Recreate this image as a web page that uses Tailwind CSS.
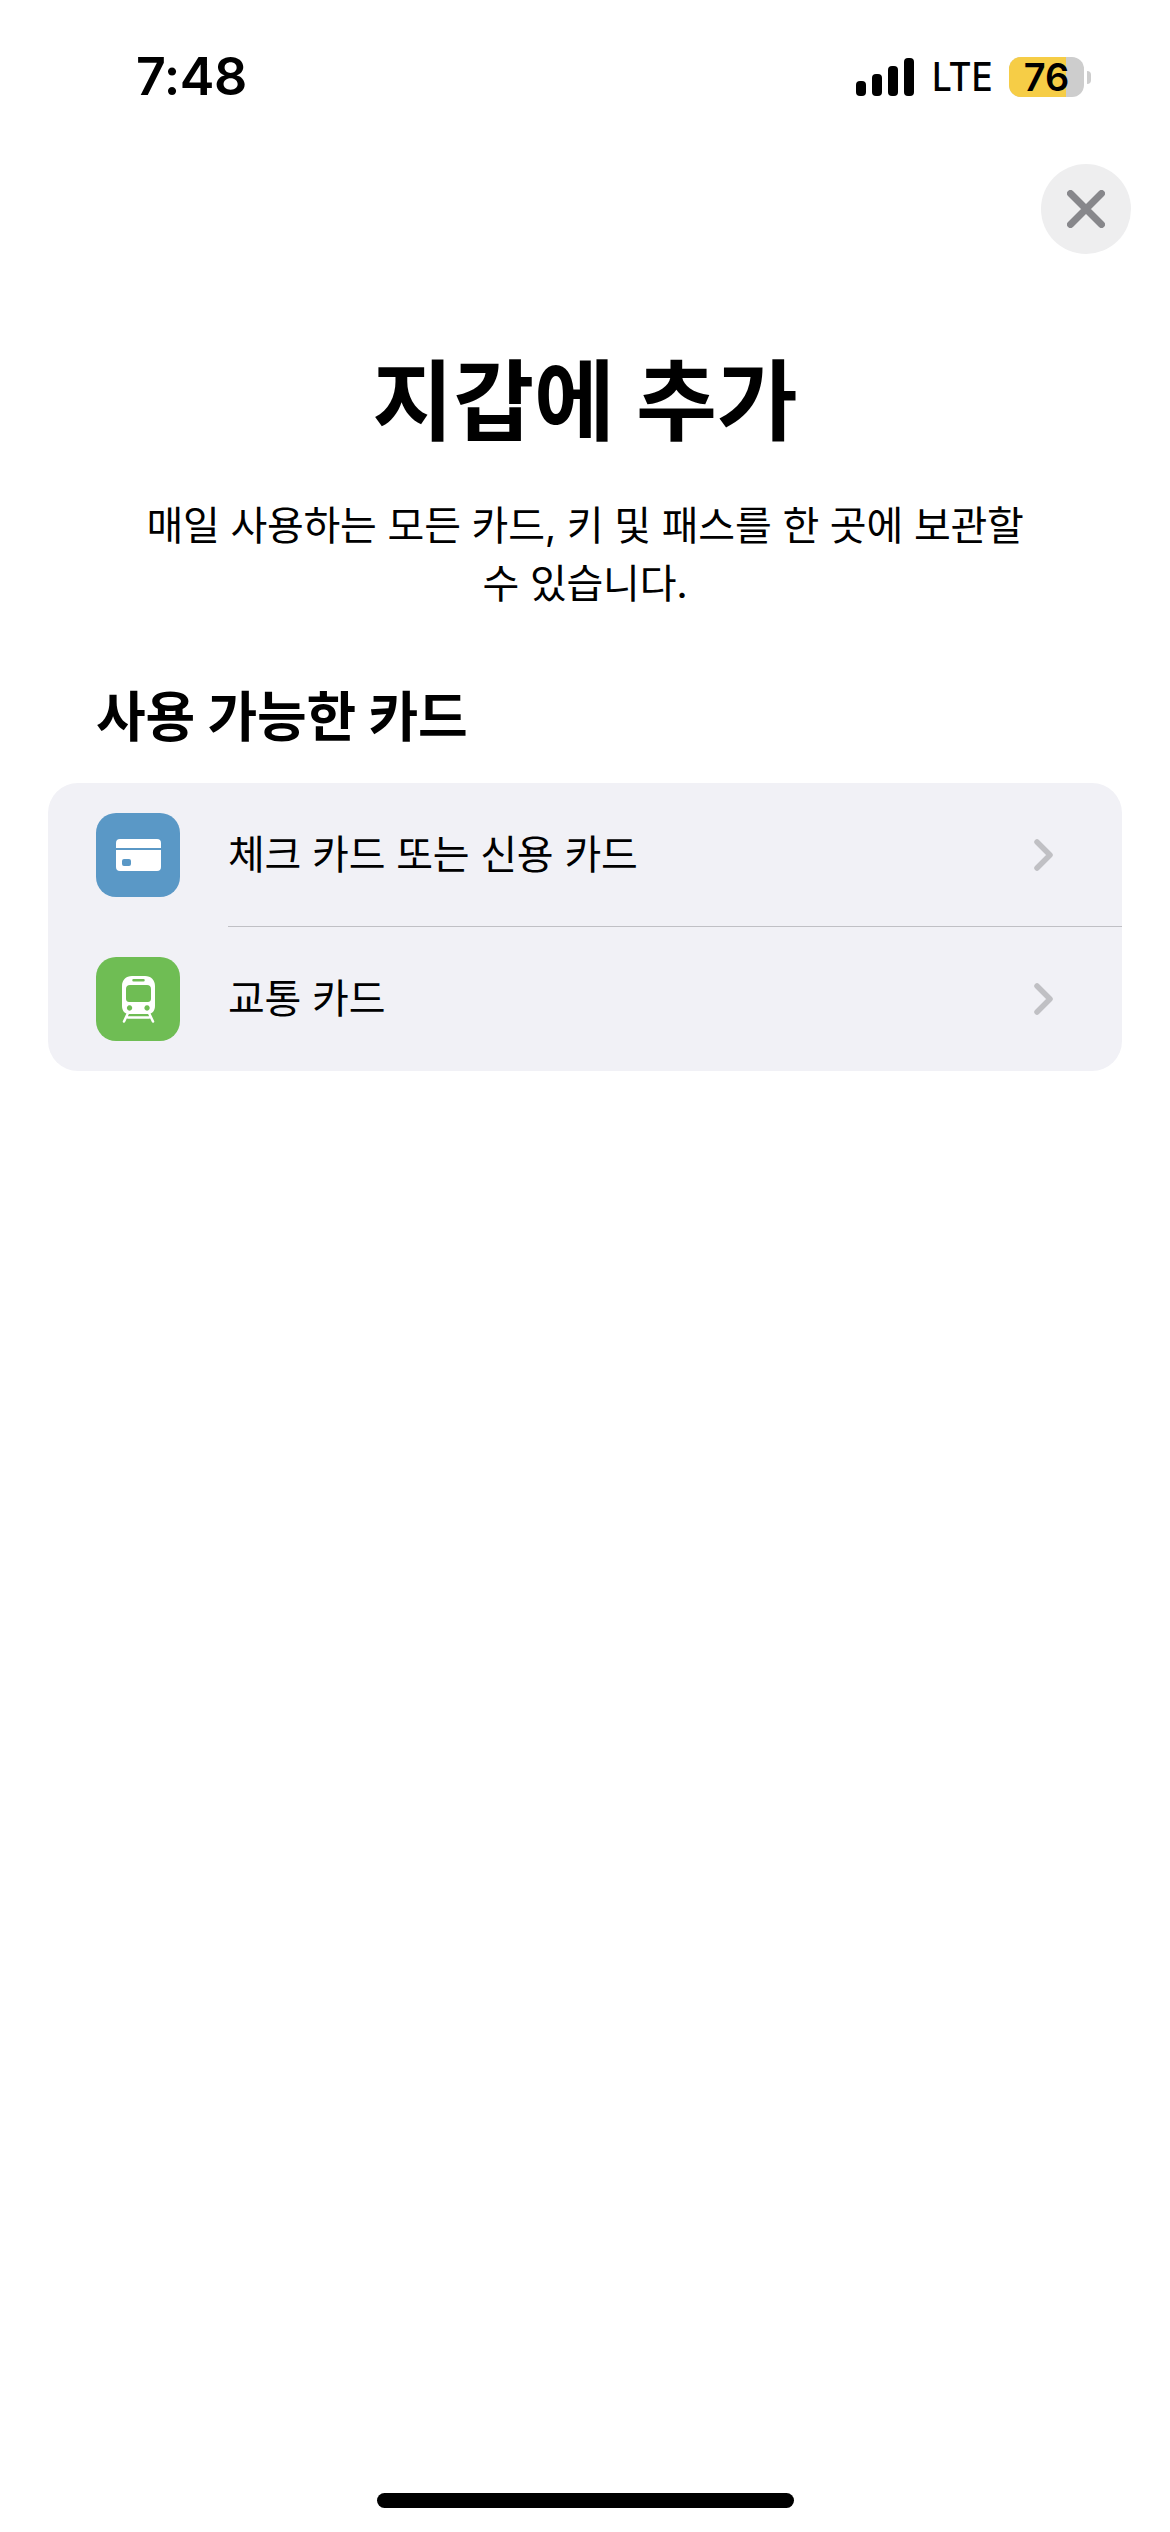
<!DOCTYPE html>
<html lang="ko">
<head>
    <meta charset="UTF-8">
    <meta name="viewport" content="width=device-width, initial-scale=1.0">
    <title>지갑에 추가</title>
    <script src="https://cdn.jsdelivr.net/npm/@tailwindcss/browser@4"></script>
</head>
<body class="bg-white text-black font-['Inter','Noto_Sans_CJK_KR',sans-serif]">
    <div class="relative w-[1170px] h-[2532px] overflow-hidden flex flex-col">

        <!-- Status bar -->
        <div class="flex items-center justify-between h-[154px] pl-[136px] pr-[79px] shrink-0">
            <span class="text-[52px] leading-none font-semibold tracking-[-0.5px]">7:48</span>
            <div class="flex items-center">
                <svg width="58" height="38" viewBox="0 0 58 38" fill="#000">
                    <rect x="0" y="23" width="10" height="15" rx="4"/>
                    <rect x="16" y="16" width="10" height="22" rx="4"/>
                    <rect x="32" y="8" width="10" height="30" rx="4"/>
                    <rect x="48" y="0" width="10" height="38" rx="4"/>
                </svg>
                <span class="ml-[18px] text-[40px] leading-none font-medium w-[58px] scale-x-[0.88] origin-left">LTE</span>
                <div class="relative ml-[19px] w-[75px] h-[40px] rounded-[12px] bg-[#cdcdcd] flex items-center justify-center">
                    <div class="absolute left-0 top-0 bottom-0 w-[57px] rounded-l-[12px] bg-[#f6cd46]"></div>
                    <span class="relative text-[38px] leading-none font-semibold">76</span>
                </div>
                <div class="ml-[3px] w-[4px] h-[13px] rounded-r-full bg-[#cdcdcd]"></div>
            </div>
        </div>

        <!-- Close button -->
        <div class="flex justify-end pr-[39px] shrink-0">
            <div class="w-[90px] h-[90px] mt-[10px] rounded-full bg-[#eeeeef] flex items-center justify-center">
                <svg width="38" height="38" viewBox="0 0 38 38" fill="none" stroke="#87878b" stroke-width="7" stroke-linecap="round">
                    <path d="M3.5 3.5L34.500 34.500M34.500 3.500L3.500 34.500"/>
                </svg>
            </div>
        </div>

        <!-- Title -->
        <h1 class="mt-[95px] text-center text-[88px] leading-[104px] font-bold">지갑에 추가</h1>
        <p class="mt-[44px] text-center text-[40px] leading-[58px] tracking-[-0.28px]">매일 사용하는 모든 카드, 키 및 패스를 한 곳에 보관할<br>수 있습니다.</p>

        <!-- Section -->
        <h2 class="mt-[70px] pl-[96px] text-[54px] leading-[70px] font-bold tracking-[-0.2px]">사용 가능한 카드</h2>

        <div class="mt-[30px] mx-[48px] rounded-[30px] bg-[#f1f1f6]">
            <div class="flex items-center h-[144px] pl-[48px] pr-[69px]">
                <div class="w-[84px] h-[84px] rounded-[20px] bg-[#5a98c6] flex items-center justify-center shrink-0">
                    <svg width="45" height="32" viewBox="0 0 45 32">
                        <path fill="#fff" fill-rule="evenodd" d="M4 0H41A4 4 0 0 1 45 4V9H0V4A4 4 0 0 1 4 0ZM0 11H45V28A4 4 0 0 1 41 32H4A4 4 0 0 1 0 28ZM8 20A2 2 0 0 0 6 22V25A2 2 0 0 0 8 27H13A2 2 0 0 0 15 25V22A2 2 0 0 0 13 20Z"/>
                    </svg>
                </div>
                <span class="ml-[48px] text-[40px] leading-none flex-1 tracking-[-0.25px]">체크 카드 또는 신용 카드</span>
                <svg width="19" height="32" viewBox="0 0 19 32" fill="none" stroke="#c0c0c4" stroke-width="5.5" stroke-linecap="round" stroke-linejoin="round">
                    <path d="M3 3L16 16L3 29"/>
                </svg>
            </div>
            <div class="ml-[180px] -mt-[1.5px] h-[1.5px] bg-[#c0c0c5]"></div>
            <div class="flex items-center h-[144px] pl-[48px] pr-[69px]">
                <div class="w-[84px] h-[84px] rounded-[20px] bg-[#6fbd54] flex items-center justify-center shrink-0">
                    <svg width="33" height="47" viewBox="0 0 33 47">
                        <path fill="#fff" fill-rule="evenodd" d="M10 0H23C29 0 33 4 33 10V30C33 35 30 38 26 38H7C3 38 0 35 0 30V10C0 4 4 0 10 0ZM11.500 3A1.250 1.250 0 0 0 11.500 5.500H21.500A1.250 1.250 0 0 0 21.500 3ZM8 9C5.500 9 4 10.500 4 13V23C4 25 5.500 26 7 26H26C27.500 26 29 25 29 23V13C29 10.500 27.500 9 25 9ZM7.500 29.300A2.700 2.700 0 1 0 7.600 29.300ZM25 29.300A2.700 2.700 0 1 0 25.100 29.300Z"/>
                        <path fill="none" stroke="#fff" stroke-width="2.500" stroke-linecap="round" d="M6 37L2 45.500M27 37L31 45.500M6 41.500H27"/>
                    </svg>
                </div>
                <span class="ml-[48px] text-[40px] leading-none flex-1 tracking-[-0.25px]">교통 카드</span>
                <svg width="19" height="32" viewBox="0 0 19 32" fill="none" stroke="#c0c0c4" stroke-width="5.5" stroke-linecap="round" stroke-linejoin="round">
                    <path d="M3 3L16 16L3 29"/>
                </svg>
            </div>
        </div>

        <!-- Home indicator -->
        <div class="absolute left-[377px] bottom-[24px] w-[417px] h-[15px] rounded-full bg-black"></div>
    </div>
</body>
</html>
